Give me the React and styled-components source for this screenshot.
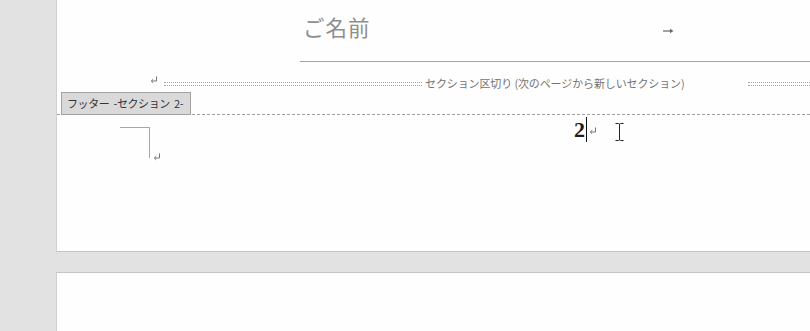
import styled, { createGlobalStyle } from 'styled-components';

const GlobalStyle = createGlobalStyle`
    html, body {
        margin: 0;
        padding: 0;
        background: #e2e2e2;
        overflow: hidden;
    }
    body {
        width: 810px;
        height: 331px;
        font-family: "Noto Sans CJK JP", "Noto Sans", sans-serif;
    }
`

function ReturnMark({ color = '#777' }) {
    return (
        <svg width="8" height="8" viewBox="0 0 8 8">
            <path d="M6.5 0.5 V5 H1.5" fill="none" stroke={color} strokeWidth="1" />
            <path d="M3.2 3.2 L1.3 5 L3.2 6.8" fill="none" stroke={color} strokeWidth="1" />
        </svg>
    )
}

function TabArrow() {
    return (
        <svg width="11" height="6" viewBox="0 0 11 6">
            <path d="M0 3 H8" stroke="#666" strokeWidth="1.2" />
            <path d="M7 0.8 L10.5 3 L7 5.2 Z" fill="#666" />
        </svg>
    )
}

function IBeam() {
    return (
        <svg width="9" height="18" viewBox="0 0 9 18">
            <path d="M0.5 0.5 H3.5 M5.5 0.5 H8.5 M4.5 1 V17 M0.5 17.5 H3.5 M5.5 17.5 H8.5" fill="none" stroke="#222" strokeWidth="1" />
            <path d="M3.5 0.5 L4.5 1.2 L5.5 0.5 M3.5 17.5 L4.5 16.8 L5.5 17.5" fill="none" stroke="#222" strokeWidth="1" />
        </svg>
    )
}

function App() {
    return (
        <>
            <GlobalStyle />
            <Workspace>
                <Page>
                    <TitleRow>
                        <TitleText>ご名前</TitleText>
                        <TabSlot><TabArrow /></TabSlot>
                    </TitleRow>

                    <BreakRow>
                        <BreakReturn><ReturnMark /></BreakReturn>
                        <Dotted width="258px" />
                        <BreakText>セクション区切り (次のページから新しいセクション)</BreakText>
                        <Dotted grow />
                    </BreakRow>

                    <FooterBar>
                        <FooterTab>フッター -セクション 2-</FooterTab>
                    </FooterBar>

                    <FooterBody>
                        <CornerGroup>
                            <Corner />
                            <CornerReturn><ReturnMark /></CornerReturn>
                        </CornerGroup>
                        <NumberLine>
                            <PageNumber>2</PageNumber>
                            <Caret />
                            <NumberReturn><ReturnMark /></NumberReturn>
                            <Pointer><IBeam /></Pointer>
                        </NumberLine>
                    </FooterBody>
                </Page>
                <NextPage />
            </Workspace>
        </>
    )
}

const Workspace = styled.div`
    display: flex;
    flex-direction: column;
    width: 810px;
    height: 331px;
    padding-left: 56px;
    box-sizing: border-box;
`
const Page = styled.div`
    display: flex;
    flex-direction: column;
    height: 252px;
    box-sizing: border-box;
    background: #fefefe;
    border-left: 1px solid #d0d0d0;
    border-bottom: 1px solid #c4c4c4;
`
const TitleRow = styled.div`
    display: grid;
    grid-template-columns: 363px auto;
    margin-left: 243px;
    height: 62px;
    box-sizing: border-box;
    border-bottom: 1px solid #a3a3a3;
`
const TitleText = styled.div`
    padding: 12px 0 0 3px;
    font-size: 21.5px;
    line-height: 30px;
    letter-spacing: 1px;
    color: #8e8e8e;
`
const TabSlot = styled.div`
    display: flex;
    align-items: flex-start;
    padding-top: 28px;
`
const BreakRow = styled.div`
    display: flex;
    align-items: center;
    height: 18px;
    margin-top: 12px;
`
const BreakReturn = styled.div`
    display: flex;
    margin: -6px 6px 0 93px;
`
const Dotted = styled.div`
    width: ${p => p.width || 'auto'};
    flex: ${p => (p.grow ? 1 : 'none')};
    height: 2px;
    margin-top: 2px;
    border-top: 1px dotted #a8a8a8;
    border-bottom: 1px dotted #a8a8a8;
    ${p => p.grow && 'margin-left: 63px;'}
`
const BreakText = styled.span`
    font-size: 11px;
    line-height: 18px;
    color: #747474;
    letter-spacing: -0.12px;
    margin-left: 3px;
    white-space: nowrap;
`
const FooterBar = styled.div`
    display: flex;
    height: 23px;
    box-sizing: border-box;
    border-bottom: 1px dashed #a0a0a0;
`
const FooterTab = styled.div`
    margin-left: 4px;
    width: 130px;
    height: 23px;
    box-sizing: border-box;
    padding-left: 5px;
    background: #d9d9d9;
    border: 1px solid #a2a2a2;
    font-size: 11px;
    line-height: 20px;
    letter-spacing: -0.4px;
    word-spacing: 2px;
    color: #333;
    white-space: nowrap;
`
const FooterBody = styled.div`
    display: grid;
    grid-template-columns: 517px auto;
`
const CornerGroup = styled.div`
    display: flex;
    align-items: flex-end;
    padding: 12px 0 0 63px;
`
const Corner = styled.div`
    width: 29px;
    height: 30px;
    border-top: 1px solid #a6a6a6;
    border-right: 1px solid #a6a6a6;
`
const CornerReturn = styled.div`
    display: flex;
    margin: 0 0 -3px 3px;
`
const NumberLine = styled.div`
    display: flex;
    align-items: center;
    height: 25px;
    margin-top: 2px;
`
const PageNumber = styled.span`
    font-family: "Liberation Serif", serif;
    font-size: 22px;
    font-weight: 700;
    line-height: 25px;
    color: #1a1a1a;
`
const Caret = styled.div`
    width: 1px;
    height: 25px;
    background: #111;
    margin-left: 1px;
`
const NumberReturn = styled.div`
    display: flex;
    margin: 3px 0 0 2px;
`
const Pointer = styled.div`
    display: flex;
    margin: 5px 0 0 18px;
`
const NextPage = styled.div`
    flex: 1;
    margin-top: 20px;
    background: #fefefe;
    border-left: 1px solid #d0d0d0;
    border-top: 1px solid #c4c4c4;
`

export default App
